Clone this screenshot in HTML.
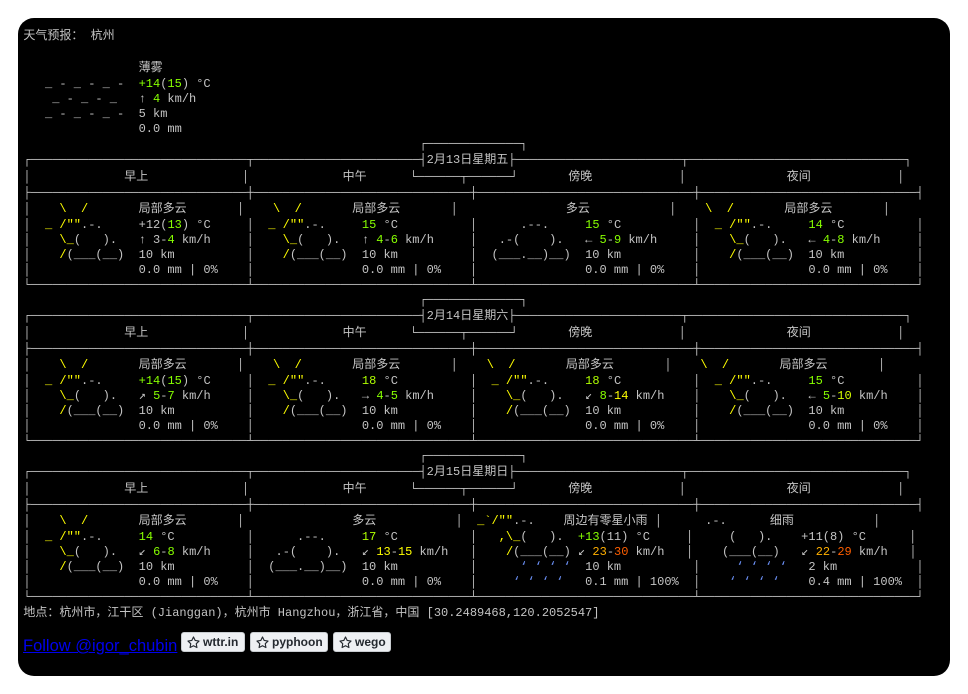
<!DOCTYPE html>
<html><head><meta charset="utf-8">
<style>
html,body{margin:0;padding:0;background:#fff;width:968px;height:694px;overflow:hidden}
.card{position:absolute;left:18px;top:18px;width:932px;height:658px;background:#000;border-radius:16px}
.t{position:absolute;left:23.4px;top:28px;font-family:"Liberation Mono","DejaVu Sans Mono","Noto Sans CJK SC",monospace;font-size:12px;color:#c4c4c4}
.t div{white-space:pre;height:15px;line-height:15px}
.t div.c{height:17px;line-height:17px}
i{font-style:normal}
.y{color:#ffff00}.g{color:#87ff00}.h{color:#afff00}.k{color:#d7ff00}.w{color:#ffff00}.o{color:#ffaf00}.r{color:#ff5f00}.b{color:#6f95ff}
.f{position:absolute;left:23px;top:637px;font-family:"Liberation Sans",sans-serif;font-size:16.5px;color:#0000ee;text-decoration:underline}
.btn{position:absolute;top:632px;height:18px;border:1px solid #c8ccd0;border-radius:3px;background:#eef0f3;font-family:"Liberation Sans",sans-serif;font-weight:bold;font-size:12px;color:#24292f;line-height:18px;box-sizing:content-box}
.btn svg{position:absolute;left:5px;top:3px}
.btn span{position:absolute;left:21px;top:0}
</style></head><body>
<div class="card"></div>
<div class="t">
<div class="c">天气预报： 杭州</div>
<div> </div>
<div class="c">                薄雾</div>
<div>   _ - _ - _ -  <i class=g>+14</i>(<i class=g>15</i>) °C</div>
<div>    _ - _ - _   ↑ <i class=g>4</i> km/h</div>
<div>   _ - _ - _ -  5 km</div>
<div>                0.0 mm</div>
<div>                                                       ┌─────────────┐</div>
<div class="c">┌──────────────────────────────┬───────────────────────┤2月13日星期五├───────────────────────┬──────────────────────────────┐</div>
<div class="c">│             早上             │             中午      └──────┬──────┘       傍晚            │              夜间            │</div>
<div>├──────────────────────────────┼──────────────────────────────┼──────────────────────────────┼──────────────────────────────┤</div>
<div class="c">│    <i class=y>\  /</i>       局部多云       │    <i class=y>\  /</i>       局部多云       │               多云           │    <i class=y>\  /</i>       局部多云       │</div>
<div>│  <i class=y>_ /""</i>.-.     +12(<i class=g>13</i>) °C     │  <i class=y>_ /""</i>.-.     <i class=g>15</i> °C          │      .--.     <i class=g>15</i> °C          │  <i class=y>_ /""</i>.-.     <i class=g>14</i> °C          │</div>
<div>│    <i class=y>\_</i>(   ).   ↑ 3-<i class=g>4</i> km/h     │    <i class=y>\_</i>(   ).   ↑ <i class=g>4</i>-<i class=g>6</i> km/h     │   .-(    ).   ← <i class=g>5</i>-<i class=g>9</i> km/h     │    <i class=y>\_</i>(   ).   ← <i class=g>4</i>-<i class=g>8</i> km/h     │</div>
<div>│    <i class=y>/</i>(___(__)  10 km          │    <i class=y>/</i>(___(__)  10 km          │  (___.__)__)  10 km          │    <i class=y>/</i>(___(__)  10 km          │</div>
<div>│               0.0 mm | 0%    │               0.0 mm | 0%    │               0.0 mm | 0%    │               0.0 mm | 0%    │</div>
<div>└──────────────────────────────┴──────────────────────────────┴──────────────────────────────┴──────────────────────────────┘</div>
<div>                                                       ┌─────────────┐</div>
<div class="c">┌──────────────────────────────┬───────────────────────┤2月14日星期六├───────────────────────┬──────────────────────────────┐</div>
<div class="c">│             早上             │             中午      └──────┬──────┘       傍晚            │              夜间            │</div>
<div>├──────────────────────────────┼──────────────────────────────┼──────────────────────────────┼──────────────────────────────┤</div>
<div class="c">│    <i class=y>\  /</i>       局部多云       │    <i class=y>\  /</i>       局部多云       │    <i class=y>\  /</i>       局部多云       │    <i class=y>\  /</i>       局部多云       │</div>
<div>│  <i class=y>_ /""</i>.-.     <i class=g>+14</i>(<i class=g>15</i>) °C     │  <i class=y>_ /""</i>.-.     <i class=h>18</i> °C          │  <i class=y>_ /""</i>.-.     <i class=h>18</i> °C          │  <i class=y>_ /""</i>.-.     <i class=g>15</i> °C          │</div>
<div>│    <i class=y>\_</i>(   ).   ↗ <i class=g>5</i>-<i class=g>7</i> km/h     │    <i class=y>\_</i>(   ).   → <i class=g>4</i>-<i class=g>5</i> km/h     │    <i class=y>\_</i>(   ).   ↙ <i class=g>8</i>-<i class=w>14</i> km/h    │    <i class=y>\_</i>(   ).   ← <i class=g>5</i>-<i class=k>10</i> km/h    │</div>
<div>│    <i class=y>/</i>(___(__)  10 km          │    <i class=y>/</i>(___(__)  10 km          │    <i class=y>/</i>(___(__)  10 km          │    <i class=y>/</i>(___(__)  10 km          │</div>
<div>│               0.0 mm | 0%    │               0.0 mm | 0%    │               0.0 mm | 0%    │               0.0 mm | 0%    │</div>
<div>└──────────────────────────────┴──────────────────────────────┴──────────────────────────────┴──────────────────────────────┘</div>
<div>                                                       ┌─────────────┐</div>
<div class="c">┌──────────────────────────────┬───────────────────────┤2月15日星期日├───────────────────────┬──────────────────────────────┐</div>
<div class="c">│             早上             │             中午      └──────┬──────┘       傍晚            │              夜间            │</div>
<div>├──────────────────────────────┼──────────────────────────────┼──────────────────────────────┼──────────────────────────────┤</div>
<div class="c">│    <i class=y>\  /</i>       局部多云       │               多云           │  <i class=y>_`/""</i>.-.    周边有零星小雨 │      .-.      细雨           │</div>
<div>│  <i class=y>_ /""</i>.-.     <i class=g>14</i> °C          │      .--.     <i class=h>17</i> °C          │   <i class=y>,\_</i>(   ).  <i class=g>+13</i>(11) °C     │     (   ).    +11(8) °C      │</div>
<div>│    <i class=y>\_</i>(   ).   ↙ <i class=g>6</i>-<i class=g>8</i> km/h     │   .-(    ).   ↙ <i class=w>13</i>-<i class=w>15</i> km/h   │    <i class=y>/</i>(___(__) ↙ <i class=o>23</i>-<i class=r>30</i> km/h   │    (___(__)   ↙ <i class=o>22</i>-<i class=r>29</i> km/h   │</div>
<div>│    <i class=y>/</i>(___(__)  10 km          │  (___.__)__)  10 km          │      <i class=b>‘ ‘ ‘ ‘</i>  10 km          │     <i class=b>‘ ‘ ‘ ‘</i>   2 km           │</div>
<div>│               0.0 mm | 0%    │               0.0 mm | 0%    │     <i class=b>‘ ‘ ‘ ‘</i>   0.1 mm | 100%  │    <i class=b>‘ ‘ ‘ ‘</i>    0.4 mm | 100%  │</div>
<div>└──────────────────────────────┴──────────────────────────────┴──────────────────────────────┴──────────────────────────────┘</div>
<div class="c">地点：杭州市，江干区 (Jianggan)，杭州市 Hangzhou，浙江省，中国 [30.2489468,120.2052547]</div>
</div>
<div class="f">Follow @igor_chubin</div>
<div class="btn" style="left:181px;width:62px"><svg width="13" height="13" viewBox="0 0 16 16"><path d="M8 1.2l2.1 4.3 4.7.7-3.4 3.3.8 4.7L8 12l-4.2 2.2.8-4.7L1.2 6.2l4.7-.7z" fill="none" stroke="#24292f" stroke-width="1.4" stroke-linejoin="round"/></svg><span>wttr.in</span></div>
<div class="btn" style="left:250px;width:76px"><svg width="13" height="13" viewBox="0 0 16 16"><path d="M8 1.2l2.1 4.3 4.7.7-3.4 3.3.8 4.7L8 12l-4.2 2.2.8-4.7L1.2 6.2l4.7-.7z" fill="none" stroke="#24292f" stroke-width="1.4" stroke-linejoin="round"/></svg><span>pyphoon</span></div>
<div class="btn" style="left:333px;width:56px"><svg width="13" height="13" viewBox="0 0 16 16"><path d="M8 1.2l2.1 4.3 4.7.7-3.4 3.3.8 4.7L8 12l-4.2 2.2.8-4.7L1.2 6.2l4.7-.7z" fill="none" stroke="#24292f" stroke-width="1.4" stroke-linejoin="round"/></svg><span>wego</span></div>
</body></html>
